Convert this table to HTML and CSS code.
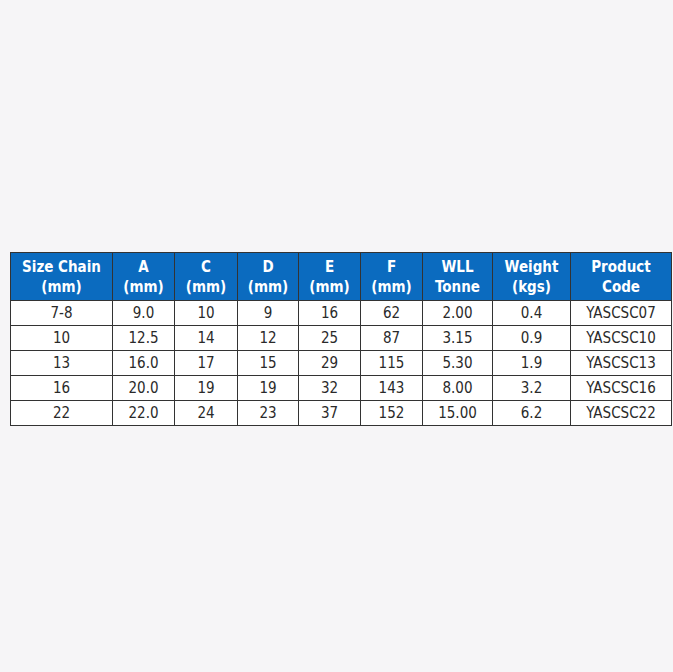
FILE: index.html
```html
<!DOCTYPE html>
<html>
<head>
<meta charset="utf-8">
<link rel="stylesheet" href="styles.css">
</head>
<body>
<div class="page">
<table class="spec">
<colgroup>
<col class="c1"><col class="c2"><col class="c3"><col class="c4"><col class="c5"><col class="c6"><col class="c7"><col class="c8"><col class="c9">
</colgroup>
<thead>
<tr><th>Size Chain<br>(mm)</th><th>A<br>(mm)</th><th>C<br>(mm)</th><th>D<br>(mm)</th><th>E<br>(mm)</th><th>F<br>(mm)</th><th>WLL<br>Tonne</th><th>Weight<br>(kgs)</th><th>Product<br>Code</th></tr>
</thead>
<tbody>
<tr><td>7-8</td><td>9.0</td><td>10</td><td>9</td><td>16</td><td>62</td><td>2.00</td><td>0.4</td><td>YASCSC07</td></tr>
<tr><td>10</td><td>12.5</td><td>14</td><td>12</td><td>25</td><td>87</td><td>3.15</td><td>0.9</td><td>YASCSC10</td></tr>
<tr><td>13</td><td>16.0</td><td>17</td><td>15</td><td>29</td><td>115</td><td>5.30</td><td>1.9</td><td>YASCSC13</td></tr>
<tr><td>16</td><td>20.0</td><td>19</td><td>19</td><td>32</td><td>143</td><td>8.00</td><td>3.2</td><td>YASCSC16</td></tr>
<tr><td>22</td><td>22.0</td><td>24</td><td>23</td><td>37</td><td>152</td><td>15.00</td><td>6.2</td><td>YASCSC22</td></tr>
</tbody>
</table>
</div>
</body>
</html>
```
FILE: styles.css
```css
html, body {
  margin: 0;
  padding: 0;
  background: #f6f5f7;
}
.page {
  width: 673px;
  height: 672px;
  padding-top: 252px;
  padding-left: 10px;
  box-sizing: border-box;
}
.spec {
  border-collapse: collapse;
  table-layout: fixed;
  width: 661px;
  font-family: "Liberation Sans Narrow", "DejaVu Sans Condensed", "Liberation Sans", sans-serif;
  font-size: 15px;
  color: #2a2a2a;
  background: #ffffff;
}
.c1 { width: 102px; }
.c2 { width: 62px; }
.c3 { width: 63px; }
.c4 { width: 61px; }
.c5 { width: 62px; }
.c6 { width: 62px; }
.c7 { width: 70px; }
.c8 { width: 78px; }
.c9 { width: 101px; }
.spec th, .spec td {
  border: 1px solid #333;
  text-align: center;
  padding: 0;
}
.spec th {
  background: #0b6bbf;
  color: #ffffff;
  font-weight: bold;
  height: 47px;
  line-height: 20px;
}
.spec td {
  height: 24px;
  line-height: 24px;
}
```
